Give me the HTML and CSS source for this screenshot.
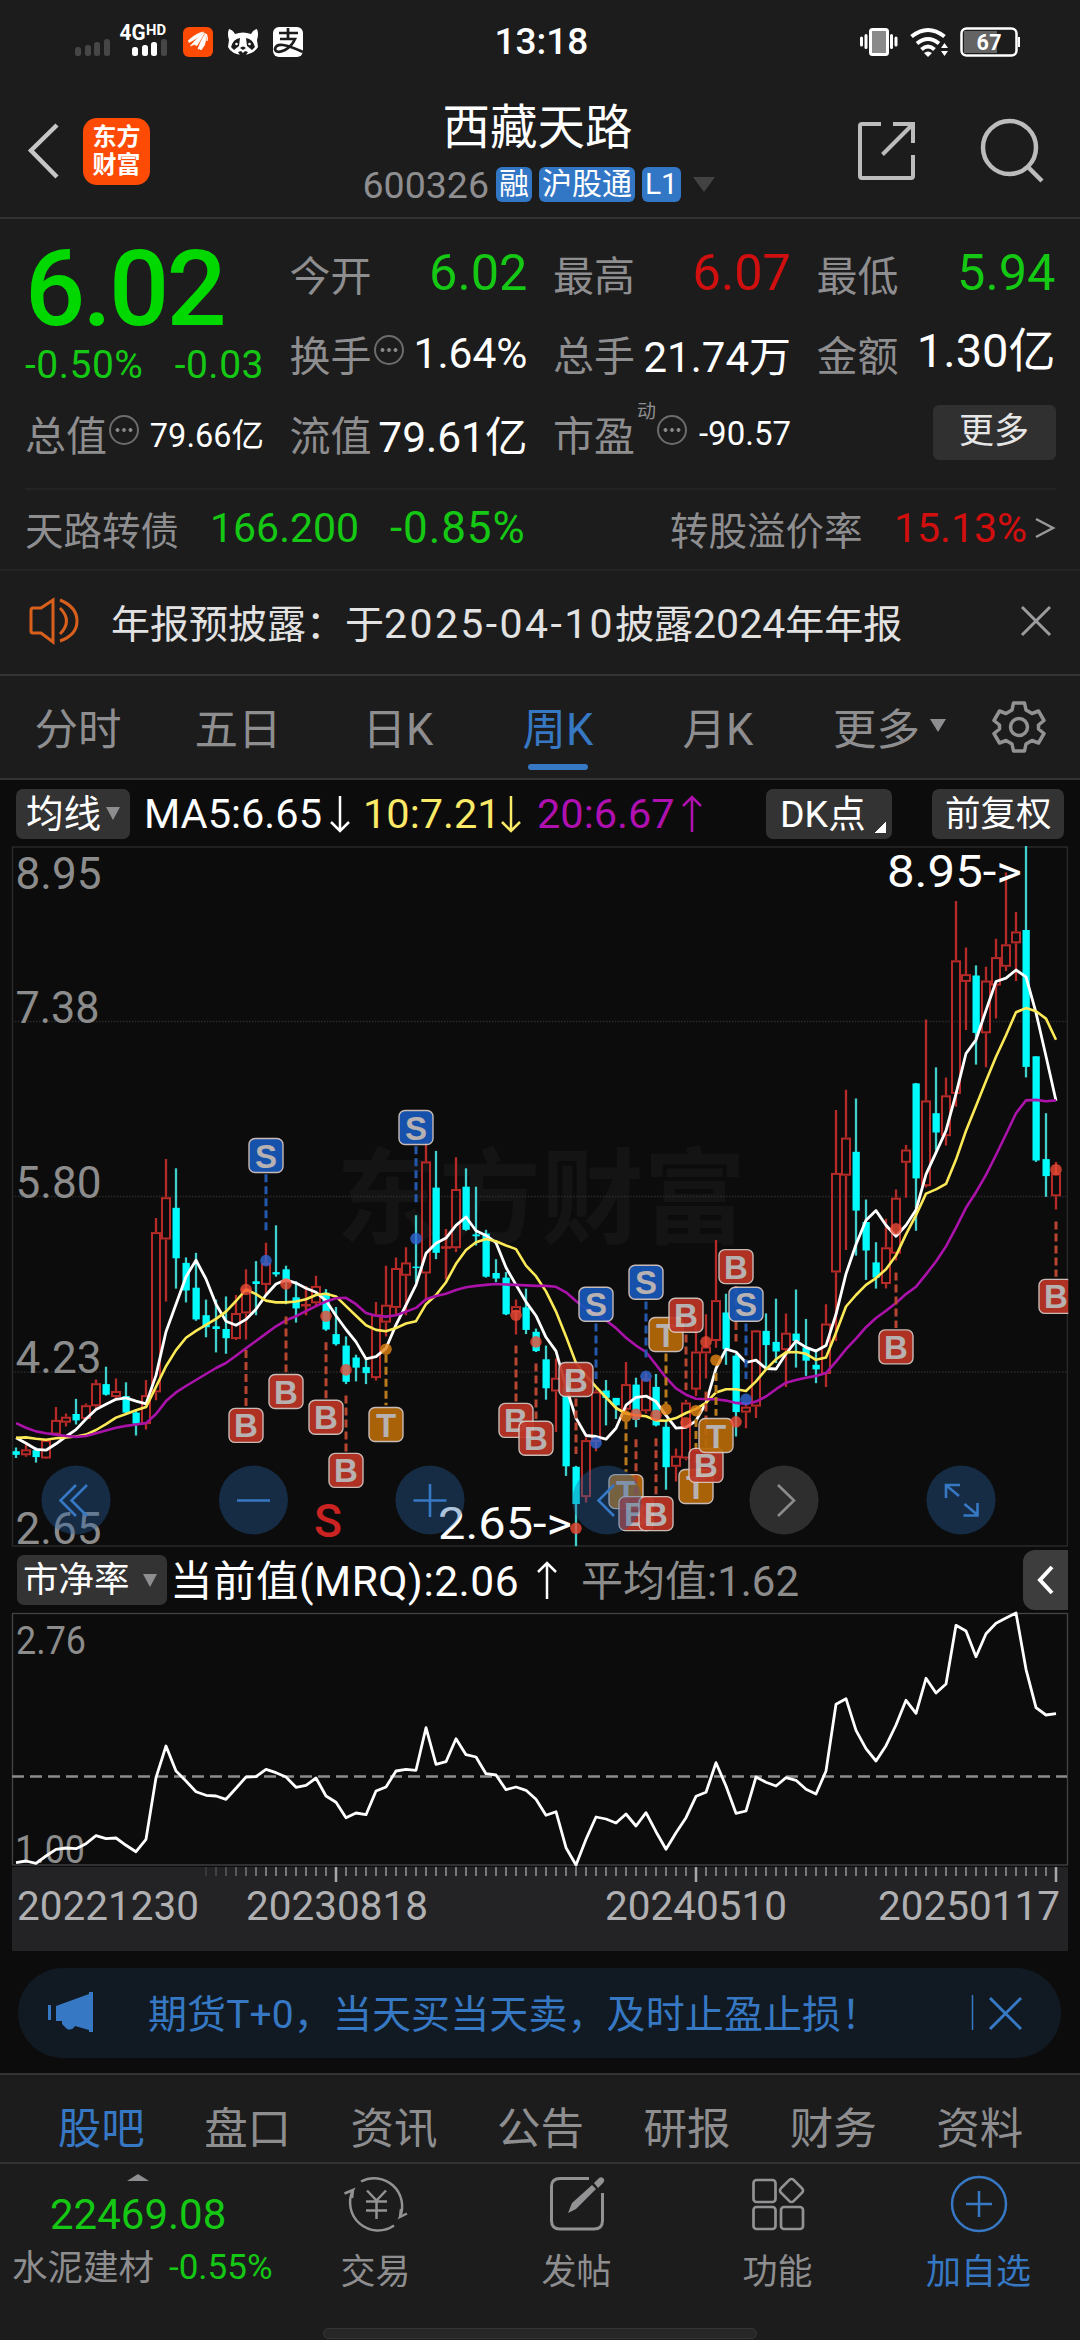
FILE: index.html
```html
<!DOCTYPE html>
<html lang="zh-CN">
<head>
<meta charset="utf-8">
<title>西藏天路 600326</title>
<link rel="stylesheet" href="styles.css">
</head>
<body>
<div class="status">
  <svg class="status-left" width="250" height="60" viewBox="70 10 250 60">
    <g fill="#464646"><rect x="75" y="47" width="6" height="9" rx="2.5"/><rect x="85" y="45" width="6" height="11" rx="2.5"/><rect x="94" y="42" width="6" height="14" rx="2.5"/><rect x="104" y="39" width="6" height="17" rx="2.5"/><rect x="161" y="39" width="6" height="17" rx="2.5"/></g>
    <g fill="#fff"><rect x="132" y="47" width="6" height="9" rx="2.5"/><rect x="142" y="45" width="6" height="11" rx="2.5"/><rect x="151" y="42" width="6" height="14" rx="2.5"/></g>
    <text class="net" x="119.500" y="40" font-size="21.500" textLength="26" lengthAdjust="spacingAndGlyphs">4G</text>
    <text class="net" x="146" y="35" font-size="14" textLength="20" lengthAdjust="spacingAndGlyphs">HD</text>
    <rect x="183" y="27" width="30" height="30" rx="6" fill="#fd4a05"/>
    <path d="M188.500 40.500q8-7.500 15-8.500q-3 4.500-14.500 10.500zM190.500 46q9-11 14-13l-7.500 12.500q-3-2-5.500 0zM198 49q3-9 7.500-15.500q.5 8-1 11.500q-2 3-3.500 5q-1-2-3-1zM206.500 34l.5 7q1-3-.5-7z" fill="#fff" stroke="#fff" stroke-width=".8"/>
    <path d="M229 29q4 1 6 5q8-3 16 0q2-4 6-5q2 5 0 11l1 7q-4 7-15 8q-12-1-15-8l1-7q-2-6 0-11z" fill="#fff"/>
    <path d="M231 47q2-8 9-9l-1 8l-5 4zM255 47q-2-8-9-9l1 8l5 4zM240 48q3-3 6 0l-3 2zM238 52l3-1 2 2 2-2 3 1-2 3h-6z" fill="#1c1c1c"/><circle cx="236.500" cy="44" r="1.300" fill="#fff"/><circle cx="249.500" cy="44" r="1.300" fill="#fff"/>
    <rect x="273" y="27" width="30" height="30" rx="6" fill="#fff"/>
    <path d="M279 33h19M288 28v10M280 39h15q-3 7-10 11q-9 4-10-1q1-5 8-4q7 1 20 7" fill="none" stroke="#1c1c1c" stroke-width="2.700"/>
  </svg>
  <div class="clock">13:18</div>
  <svg class="status-right" width="170" height="60" viewBox="855 10 170 60">
    <rect x="870.500" y="29.500" width="17" height="25" rx="2" fill="#8a8a8a" stroke="#fff" stroke-width="3"/>
    <path d="M861.500 38v7M866 35.500v12M891.500 35.500v12M896 38v7" stroke="#fff" stroke-width="3" stroke-linecap="round"/>
    <g fill="none" stroke="#fff" stroke-width="4"><path d="M911.500 36.500q16.500-13 33 0M917 43.500q11-9 22 0M921.500 49.500q6.500-6 13 0"/></g>
    <path d="M924 53q4-3 8 0l-4 4zM944.500 43l3.500 5h-7zM944.500 56l3.500-5h-7z" fill="#fff"/>
    <rect x="961.500" y="28.500" width="55" height="27" rx="5" fill="none" stroke="#fff" stroke-width="2.500"/>
    <path d="M964 31h33v22h-33z" fill="#646464"/><path d="M1019 37v10" stroke="#fff" stroke-width="2"/>
    <text class="net" x="976.500" y="50" font-size="21.500" textLength="25">67</text>
  </svg>
</div>

<header class="header">
  <div class="head-left">
    <svg width="34" height="60" viewBox="26 122 34 60"><path d="M57 126L31 151.500L57 178" fill="none" stroke="#c6c6c6" stroke-width="4.500"/></svg>
    <div class="logo">东方<br>财富</div>
  </div>
  <div class="title">
    <h1>西藏天路</h1>
    <div class="code"><span class="num">600326</span><b>融</b><b>沪股通</b><b>L1</b><i class="tri"></i></div>
  </div>
  <div class="head-right">
    <svg width="60" height="60" viewBox="857 122 60 60" fill="none" stroke="#bcbcbc" stroke-width="4"><path d="M881 125H862q-2 0-2 2v50q0 2 2 2h49q2 0 2-2V156M893 125h20v19M912 126L882.500 155.500"/></svg>
    <svg width="68" height="70" viewBox="978 117 68 70" fill="none" stroke="#bcbcbc" stroke-width="4.500"><circle cx="1009.500" cy="148.500" r="26.500"/><path d="M1028 168L1042 182"/></svg>
  </div>
</header>

<section class="quote">
  <div class="price">6.02</div>
  <div class="cell"><label>今开</label><span class="v v44 green">6.02</span></div>
  <div class="cell"><label>最高</label><span class="v v44 red">6.07</span></div>
  <div class="cell"><label>最低</label><span class="v v44 green">5.94</span></div>
  <div class="cell change green"><span>-0.50%</span><span class="diff">-0.03</span></div>
  <div class="cell"><label>换手</label><i class="dots"></i><span class="v v42">1.64%</span></div>
  <div class="cell"><label>总手</label><span class="v v41">21.74万</span></div>
  <div class="cell"><label>金额</label><span class="v v47">1.30亿</span></div>
  <div class="cell"><label>总值</label><i class="dots"></i><span class="v v32">79.66亿</span></div>
  <div class="cell"><label>流值</label><span class="v v42">79.61亿</span></div>
  <div class="cell"><label>市盈</label><sup>动</sup><i class="dots"></i><span class="v v33">-90.57</span></div>
  <div class="cell end"><span class="more">更多</span></div>
</section>
<section class="bond">
  <span class="grey">天路转债</span><span class="green b1">166.200</span><span class="green b2">-0.85%</span>
  <span class="grey b3">转股溢价率</span><span class="red b4">15.13%</span>
  <svg width="22" height="24" viewBox="0 0 22 24"><path d="M2 3L19 12L2 21" fill="none" stroke="#9a9a9c" stroke-width="2.500"/></svg>
</section>
<section class="notice">
  <svg width="54" height="48" viewBox="0 0 54 48" fill="none" stroke="#d9601c" stroke-width="3"><path d="M2 13q0-2 2-2h8L24 3v42L12 36H4q-2 0-2-2zM31 11q13 13 0 26M31 3q17 7 17 21T31 44"/></svg>
  <p>年报预披露：于<span class="d1">2025-04-10</span>披露<span class="d2">2024</span>年年报</p>
  <svg width="32" height="32" viewBox="0 0 32 32"><path d="M2 2L30 30M30 2L2 30" stroke="#9c9c9e" stroke-width="3"/></svg>
</section>

<nav class="periods">
  <a>分时</a><a>五日</a><a>日K</a><a class="on">周K</a><a>月K</a><a class="m">更多<i class="tri"></i></a>
  <svg width="56" height="56" viewBox="-28 -28 56 56" fill="none" stroke="#929294" stroke-width="3.500"><path stroke-linejoin="round" d="M-5.500-24H5.500L7-17L13-13.500L19.500-16L25-6.500L19.500-2V2L25 6.500L19.500 16L13 13.500L7 17L5.500 24H-5.500L-7 17L-13 13.500L-19.500 16L-25 6.500L-19.500 2V-2L-25-6.500L-19.500-16L-13-13.500L-7-17Z"/><circle r="8.500"/></svg>
</nav>

<main class="charts">
  <div class="tools">
    <span class="btn ma">均线<i class="tri"></i></span>
    <span class="m5">MA5:6.65</span><svg width="24" height="38" viewBox="0 0 24 38"><path d="M12 1v35M3 27l9 9 9-9" fill="none" stroke="#fff" stroke-width="2.500"/></svg>
    <span class="m10">10:7.21</span><svg width="24" height="38" viewBox="0 0 24 38"><path d="M12 1v35M3 27l9 9 9-9" fill="none" stroke="#fbe968" stroke-width="2.500"/></svg>
    <span class="m20">20:6.67</span><svg width="24" height="38" viewBox="0 0 24 38"><path d="M12 37V2M3 11l9-9 9 9" fill="none" stroke="#b010b0" stroke-width="2.500"/></svg>
    <span class="btn dk">DK点</span><span class="btn fq">前复权</span>
  </div>
  <svg id="kline" class="kline" width="1080" height="706" viewBox="0 842 1080 706"></svg>
  <div class="tools pb">
    <span class="btn pbb">市净率<i class="tri"></i></span>
    <span class="cur">当前值(MRQ):2.06</span><svg width="24" height="40" viewBox="0 0 24 40"><path d="M12 39V3M3 12l9-9 9 9" fill="none" stroke="#fff" stroke-width="2.500"/></svg>
    <span class="avg">平均值:1.62</span>
    <span class="fold"><svg width="20" height="30" viewBox="0 0 20 30"><path d="M16 2L4 15L16 28" fill="none" stroke="#fff" stroke-width="4"/></svg></span>
  </div>
  <svg id="pbline" class="pbline" width="1080" height="342" viewBox="0 1610 1080 342"></svg>
  <div class="banner">
    <svg width="48" height="42" viewBox="0 0 48 42" fill="#3678c3"><path d="M1 13h3v15H1zM9 14L42 2V0h4v40h-4v-2L28 34q-3 5-8 3l-5-5v-3H9z"/></svg>
    <p>期货T+0，当天买当天卖，及时止盈止损！</p>
    <svg width="52" height="38" viewBox="0 0 52 38" stroke="#3678c3" fill="none"><path d="M1.500 1v35" stroke-width="1.500"/><path d="M19 4L50 35M50 4L19 35" stroke-width="3"/></svg>
  </div>
</main>

<nav class="info"><a class="on">股吧</a><a>盘口</a><a>资讯</a><a>公告</a><a>研报</a><a>财务</a><a>资料</a></nav>
<footer class="bottom">
  <div class="sector">
    <i class="up"></i>
    <div class="idx green">22469.08</div>
    <div class="sec"><span>水泥建材</span><em class="green">-0.55%</em></div>
  </div>
  <div class="item"><svg width="68" height="60" viewBox="341 2174 68 60" fill="none" stroke="#929294" stroke-width="2.500"><path d="M360 2181.500A28 28 0 0 1 399 2217L406 2213.500M399 2217L400 2209M393 2225.500A28 28 0 0 1 352 2190L343.500 2193.500M352 2190l-1 8M366 2190.500l9.500 10 9.500-10M375.500 2200v19M365 2201.500h21M365 2210.500h21"/></svg><span>交易</span></div>
  <div class="item"><svg width="60" height="60" viewBox="547 2174 60 60"><path d="M589 2178.500H560q-8.500 0-8.500 8v34q0 8.500 8.500 8.500h34q8.500 0 8.500-8.500V2193" fill="none" stroke="#929294" stroke-width="3"/><path d="M568 2213l4-10 20-18 4 4-20 20zM594 2183l5-5q3-2 5 1 1 2-1 4l-5 5z" fill="#929294"/></svg><span>发帖</span></div>
  <div class="item"><svg width="60" height="60" viewBox="748 2174 60 60" fill="none" stroke="#929294" stroke-width="2.700"><rect x="753.500" y="2180" width="22" height="22" rx="3"/><rect x="753.500" y="2207" width="22" height="22" rx="3"/><rect x="781" y="2207" width="22" height="22" rx="3"/><rect x="782.500" y="2181.500" width="18" height="18" rx="3" transform="rotate(45 791.500 2190.500)"/></svg><span>功能</span></div>
  <div class="item on"><svg width="60" height="60" viewBox="0 0 60 60" fill="none" stroke="#3678c3" stroke-width="2.500"><circle cx="30" cy="30" r="27"/><path d="M30 17v26M17 30h26"/></svg><span>加自选</span></div>
  <div class="home"></div>
</footer>
<script src="chart.js"></script>
</body>
</html>
```
FILE: styles.css
```css
* { box-sizing: border-box; }
body { margin: 0; width: 1080px; height: 2340px; overflow: hidden; background: #1c1c1c; color: #fff; font-family: Roboto, "Noto Sans CJK SC", sans-serif; display: flex; flex-direction: column; white-space: nowrap; }
svg { display: block; flex: none; }
h1, p { margin: 0; font-weight: 400; }
i, em { font-style: normal; }
.green { color: #14c814; }
.red { color: #d20f0f; }
.grey { color: #8e8e90; }
.tri { display: inline-block; border: 8px solid transparent; border-top: 13px solid #8e8e90; border-bottom: 0; }

.status { height: 84px; display: grid; grid-template-columns: 1fr auto 1fr; align-items: start; padding: 10px 55px 0; }
.status-left { margin-left: 15px; }
.clock { font-size: 37px; font-weight: 500; line-height: 64px; width: 91px; }
.status-right { justify-self: end; }
.net { fill: #fff; font-weight: 700; font-family: Roboto, sans-serif; }

.header { height: 135px; border-bottom: 2px solid #323232; display: grid; grid-template-columns: 1fr auto 1fr; align-items: center; padding: 2px 34px 0 26px; }
.head-left { display: flex; align-items: center; gap: 23px; }
.logo { width: 67px; height: 67px; border-radius: 14px; background: #fd4a05; font-size: 24px; font-weight: 700; line-height: 28px; text-align: center; padding-top: 5px; }
.title { width: 350px; margin-left: 3px; }
.title h1 { font-size: 47.500px; line-height: 56px; text-align: center; padding-top: 0; height: 67px; font-weight: 400; }
.code { display: flex; align-items: center; gap: 7px; font-size: 37.500px; line-height: 34px; }
.code .num { color: #8e8e90; width: 127px; }
.code b { background: #3276c6; border-radius: 6px; height: 35px; font-size: 30px; font-weight: 400; padding: 0 3px; }
.code .tri { border-width: 15px 11px 0; border-top-color: #424242; margin-left: 5px; }
.head-right { display: flex; justify-content: flex-end; align-items: center; gap: 61px; }

.quote { height: 269px; padding: 14px 24px 0 25px; display: grid; grid-template-columns: 239px 238px 238px 239px; grid-template-rows: 80px 81px 79px; column-gap: 25.500px; }
.price { color: #00d800; font-size: 106px; font-weight: 500; line-height: 112px; letter-spacing: -2.800px; height: 81px; }
.cell { display: flex; align-items: center; }
.cell label { font-size: 41px; color: #8e8e90; }
.cell .v { margin-left: auto; }
.v44 { font-size: 50.500px; }
.v42 { font-size: 42.500px; }
.v41 { font-size: 42px; }
.v47 { font-size: 47px; line-height: 60px; margin-top: -4px; }
.v32 { font-size: 32.500px; margin-top: -2px; }
.v33 { font-size: 33px; }
.change { font-size: 39px; justify-content: space-between; padding-top: 24px; letter-spacing: .5px; }
.dots { width: 30px; height: 30px; margin: -6px 0 0 2px; border: 2.500px solid #6c6c6e; border-radius: 50%; background: radial-gradient(circle, #8e8e90 1.500px, transparent 2.200px) center / 6.500px 30px repeat-x; background-clip: content-box; padding: 0 3px; }
.cell sup { font-size: 19px; color: #8e8e90; align-self: flex-start; line-height: 24px; margin: 6px -1px 0 2px; }
.end { justify-content: flex-end; }
.more { width: 123px; height: 55px; border-radius: 6px; background: #303030; color: #e6e6e6; font-size: 35px; line-height: 53px; text-align: center; margin-top: -2px; }

.bond { height: 83px; border-bottom: 2px solid #242424; display: flex; align-items: center; padding-left: 25px; font-size: 38.500px; background: linear-gradient(#242424, #242424) 25px 0 / 1031px 2px no-repeat; }
.b1 { font-size: 41px; margin-left: 31px; width: 180px; }
.b2 { font-size: 44px; letter-spacing: .9px; width: 139px; }
.b3 { margin-left: 141px; width: 224px; }
.b4 { font-size: 41px; width: 140px; }

.notice { height: 106px; border-bottom: 2px solid #343434; display: flex; align-items: center; padding: 0 28px 2px 29px; font-size: 39px; color: #e2e2e2; }
.notice p { margin: 0 auto 0 28px; }
.d1 { font-size: 41px; letter-spacing: 2.400px; }
.d2 { font-size: 41px; }

.periods { height: 104px; border-bottom: 2px solid #343434; display: flex; align-items: center; font-size: 43.500px; color: #8e8e90; }
.periods a { width: 160px; height: 102px; line-height: 110px; text-align: center; position: relative; padding-right: 4px; }
.periods .on { color: #3678c3; }
.periods .on::after { content: ""; position: absolute; left: 48px; bottom: 8px; width: 60px; height: 6px; border-radius: 3px; background: #3678c3; }
.periods .m { width: 157px; text-align: left; padding: 0 0 0 33px; margin-right: 34px; }
.m .tri { margin: 0 0 13px 10px; }

.charts { background: #0c0c0c; height: 1296px; border-bottom: 2px solid #333; }
.tools { height: 63px; display: flex; align-items: center; padding: 4px 16px 0; font-size: 41.500px; }
.btn { background: #333334; height: 50px; border-radius: 7px; line-height: 48px; font-size: 37.500px; padding: 0 8px 0 10px; display: flex; align-items: center; }
.ma { width: 114px; }
.ma .tri { border-width: 13px 7px 0; margin-left: 5px; }
.m5 { width: 178px; margin: 0 6px 0 14px; }
.m10 { width: 128px; color: #fbe968; margin: 0 8px 0 11px; }
.m20 { width: 137px; color: #b010b0; margin: 0 6px 0 14px; }
.dk { width: 126px; margin-left: auto; padding-left: 14px; margin-right: 40px; background: linear-gradient(135deg, transparent 50%, #fff 50%) 109px 33px / 11px 11px no-repeat #333334; }
.fq { width: 132px; padding-left: 13px; font-size: 35.500px; }
.pb { height: 62px; padding: 0 12px 0 17px; }
.pbb { width: 150px; padding-left: 6px; font-size: 35.500px; }
.pbb .tri { margin-left: 13px; border-width: 13px 7px 0; }
.cur { font-size: 42.500px; letter-spacing: .5px; width: 361px; margin: -6px 0 0 3px; }
.avg { color: #8c8c8c; margin: -6px 0 0 26px; font-size: 42px; }
.cur + svg { margin-left: 4px; margin-right: -4px; }
.fold { margin-left: auto; width: 45px; height: 60px; border-radius: 12px 0 0 12px; background: #3d3d3e; display: flex; align-items: center; padding-left: 13px; }
.banner { margin: 15px 19px 0 18px; height: 90px; border-radius: 45px; background: #111a22; color: #3678c3; font-size: 39px; display: flex; align-items: center; padding: 0 38px 0 29px; }
.banner p { margin: 0 auto 0 53px; padding-bottom: 5px; letter-spacing: .1px; }

.info { height: 89px; border-bottom: 2px solid #333; display: flex; padding: 0 27px 0 28px; color: #8e8e90; font-size: 43.500px; }
.info a { flex: 1; text-align: center; line-height: 110px; height: 87px; }
.on { color: #3678c3; }
.bottom { height: 176px; display: flex; position: relative; font-size: 35px; color: #8e8e90; }
.sector { width: 275px; }
.up { display: block; width: 22px; height: 7px; margin: 10px 0 0 127px; border: 11px solid transparent; border-bottom: 7px solid #8e8e90; border-top: 0; }
.idx { font-size: 42px; line-height: 48px; margin: 10px 0 0 50px; }
.sec { display: flex; align-items: center; margin: 5px 0 0 12px; line-height: 48px; font-size: 35.500px; }
.sec em { font-size: 35px; margin-left: 15px; }
.item { width: 201px; display: flex; flex-direction: column; align-items: center; padding-top: 10px; }
.item span { line-height: 50px; margin-top: 14px; }
.item.on { color: #3678c3; }
.home { position: absolute; left: 323px; bottom: 1px; width: 434px; height: 11px; border-radius: 6px; background: #272727; border: 1px solid #363636; }
.kline text, .pbline text { font-family: Roboto, "Noto Sans CJK SC", sans-serif; }
```
FILE: chart.js
```js
// Weekly candles: [direction, high, low, body top, body bottom], 1 = up, 0 = down.
const C = [
[0,1322,1345,1330,1338],[1,1315,1342,1326,1339],[0,1322,1355,1328,1343],[1,1305,1347,1306,1346],[1,1234,1296,1262,1294],[1,1248,1276,1255,1268],[0,1216,1272,1249,1263],[1,1226,1262,1230,1260],[1,1174,1240,1182,1232],[0,1146,1209,1184,1207],
[1,1172,1216,1199,1212],[0,1180,1248,1210,1246],[0,1240,1296,1246,1270],[1,1175,1283,1208,1271],[1,822,1219,853,1202],[1,694,1004,777,869],[0,714,976,800,910],[0,908,1006,920,980],[0,898,1046,974,1043],[0,1000,1082,1034,1060],
[0,1000,1115,1058,1064],[0,993,1118,1064,1084],[1,990,1088,1029,1086],[1,934,1087,976,1030],[0,916,1034,960,966],[1,876,990,920,968],[0,838,950,940,945],[0,926,1010,934,962],[0,960,1050,995,1019],[1,970,1034,1008,1016],
[1,948,1012,970,1008],[0,977,1068,985,1065],[0,1016,1100,1075,1097],[0,1080,1184,1100,1179],[0,1120,1178,1126,1148],[0,1130,1184,1147,1160],[1,1005,1176,1032,1171],[1,926,1080,1011,1050],[1,908,1032,931,1018],[1,886,1034,919,948],
[0,816,962,928,931],[1,655,1002,699,943],[0,676,912,756,898],[1,846,956,882,891],[1,690,896,759,888],[0,714,850,754,848],[0,754,882,858,862],[0,848,952,856,950],[0,912,962,942,954],[0,940,1034,952,1032],
[1,1000,1076,1014,1028],[0,976,1075,1017,1066],[0,1063,1114,1070,1112],[0,1100,1218,1130,1193],[1,1128,1288,1170,1200],[0,1160,1384,1190,1363],[0,1362,1537,1364,1445],[1,1300,1442,1306,1430],[1,1195,1330,1200,1310],[0,1175,1274,1198,1214],
[0,1214,1260,1214,1230],[1,1136,1246,1184,1240],[0,1170,1278,1185,1262],[1,1160,1248,1172,1243],[0,1162,1276,1190,1274],[0,1262,1414,1277,1365],[1,1324,1396,1340,1364],[1,1218,1350,1224,1346],[1,1030,1210,1113,1196],[1,1032,1172,1102,1117],
[1,870,1105,1001,1090],[0,987,1142,1028,1108],[0,1118,1298,1122,1245],[1,1225,1280,1233,1246],[1,1066,1258,1067,1233],[0,1030,1147,1068,1099],[0,998,1138,1092,1113],[1,1030,1190,1072,1110],[0,978,1148,1074,1090],[0,1042,1166,1104,1133],
[0,1108,1182,1142,1152],[1,1010,1190,1052,1162],[1,587,1090,724,941],[1,543,892,647,730],[0,562,904,678,806],[0,782,957,831,893],[0,875,976,919,952],[1,824,976,886,966],[1,760,915,778,900],[1,663,778,673,702],
[0,528,850,529,736],[1,390,756,566,753],[0,494,675,594,636],[1,516,664,555,644],[1,132,580,261,552],[1,233,413,291,308],[0,272,488,294,419],[1,275,494,305,420],[1,214,388,254,316],[1,70,284,226,275],
[1,156,306,198,224],[0,12,516,195,493],[0,470,700,470,697],[0,594,776,694,731],[1,700,804,725,775]];
const MA5 = [1301,1313,1326,1328,1314,1298,1283,1260,1239,1228,1217,1214,1221,1227,1165,1070,1010,950,914,955,1010,1047,1056,1043,1021,990,966,957,964,975,984,1002,1035,1065,1092,1129,1124,1106,1055,1012,968,899,877,866,838,820,850,860,876,930,968,1005,1035,1082,1112,1190,1258,1296,1298,1304,1280,1230,1213,1210,1222,1252,1280,1278,1264,1225,1150,1108,1114,1137,1132,1150,1151,1118,1090,1104,1112,1100,1032,944,880,827,806,838,862,838,805,727,680,632,552,464,434,370,307,300,282,297,375,470,567];
const MA10 = [1301,1300,1303,1305,1302,1300,1298,1294,1284,1271,1257,1249,1241,1234,1190,1145,1110,1083,1068,1055,1042,1026,1003,978,988,1002,1006,1006,1004,999,990,987,993,1014,1035,1056,1066,1069,1062,1052,1047,1010,990,962,922,892,875,868,873,882,890,926,949,982,1026,1080,1138,1165,1190,1213,1236,1248,1252,1254,1263,1264,1258,1247,1238,1225,1202,1195,1195,1199,1178,1152,1130,1115,1114,1118,1131,1126,1072,1015,990,968,953,934,904,858,816,769,760,748,695,632,578,524,471,424,374,365,372,388,434];
const MA20 = [1269,1279,1287,1291,1294,1297,1299,1297,1291,1285,1279,1275,1272,1269,1249,1221,1202,1188,1175,1162,1149,1138,1122,1106,1090,1074,1058,1045,1036,1025,1014,1004,997,996,1010,1029,1035,1037,1034,1026,1018,999,992,987,979,973,970,968,966,967,968,969,970,970,972,984,1003,1020,1030,1045,1062,1083,1100,1114,1142,1170,1193,1207,1216,1217,1217,1220,1225,1227,1222,1211,1195,1181,1175,1170,1166,1160,1135,1108,1085,1060,1040,1024,1007,988,972,945,917,884,843,800,766,728,685,640,594,566,565,568,566];
// Trade markers: [week index, kind, badge centre, dot, dash start, dash end]
const M = [
[23,'B',1274,978,1110,1232],[25,'S',686,915,727,850],[27,'B',1200,966,1037,1158],[31,'B',1256,1036,1093,1215],[33,'B',1372,1153,1209,1331],[37,'T',1272,1108,1120,1230],[40,'S',625,867,666,788],[50,'B',1263,1034,1100,1222],[52,'B',1302,1092,1139,1260],[56,'B',1174,1498,1215,1336],[58,'S',1010,1312,1052,1173],[61,'T',1418,1254,1265,1375],[62,'B',1466,1250,1304,1425],[63,'S',962,1167,1004,1126],[64,'B',1466,1252,1302,1424],[65,'T',1076,1239,1117,1228],[67,'B',1034,1268,1076,1197],[68,'T',1407,1242,1260,1365],[69,'B',1361,1092,1200,1320],[70,'T',1296,1132,1160,1253],[72,'B',928,1266,970,1091],[73,'S',1010,1217,1052,1173],[88,'B',1103,846,941,1062],[104,'B',993,717,830,950]];
const PB = [965,960,967,945,925,921,923,908,884,893,891,913,932,895,710,615,690,720,752,763,765,775,742,708,707,685,695,708,739,733,711,765,784,830,816,821,750,738,690,685,688,560,670,662,593,641,648,698,702,746,738,748,775,823,812,920,972,895,828,834,846,819,855,815,872,925,875,830,766,754,665,735,817,810,708,724,735,710,718,745,759,690,490,473,568,623,660,614,552,478,517,412,456,429,253,270,347,278,247,231,216,385,500,522,518];

const X = i => 16 + 10 * i;
const Y = v => +(839.5 + v / 2.178).toFixed(1);
const P = v => +(1540 + v / 3).toFixed(1);
const line = (d, f, color, w) => `<polyline points="${d.map((v, i) => X(i) + ',' + f(v)).join(' ')}" fill="none" stroke="${color}" stroke-width="${w}" stroke-linejoin="round"/>`;
const text = (s, x, y, size, len, color, extra = '') => `<text x="${x}" y="${y}" font-size="${size}" textLength="${len}" lengthAdjust="spacingAndGlyphs" fill="${color}" ${extra}>${s}</text>`;

let k = text('东方财富', 336, 1235, 104, 410, '#141414', 'font-weight="700"');
k += '<rect x="12.500" y="846" width="1055" height="699" fill="none" stroke="#292929" stroke-width="1.500"/>';
for (const y of [1020.500, 1195.500, 1371]) k += `<path d="M12 ${y}H1067" stroke="#2a2a2a" stroke-width="1.500" stroke-dasharray="1.500 1.500"/>`;
k += text('8.95', 15.500, 888, 44, 86, '#8c8c8c') + text('7.38', 15.500, 1022, 44, 84, '#8c8c8c') + text('5.80', 15.500, 1197, 44, 86, '#8c8c8c') + text('4.23', 15.500, 1372, 44, 86, '#8c8c8c') + text('2.65', 15.500, 1542.500, 44, 86, '#8c8c8c');
C.forEach(([up, h, l, t, b], i) => {
  const x = X(i), yt = Y(t), yb = Y(b), color = up ? '#b62a28' : '#3fd0cc';
  if (!up) {
    k += `<path d="M${x} ${Y(h)}V${Y(l)}" stroke="${color}" stroke-width="2.300"/><rect x="${x - 3.500}" y="${yt}" width="7.300" height="${Math.max(1.500, yb - yt)}" fill="#00fcfc"/>`;
  } else if (b - t < 10) {
    k += `<path d="M${x} ${Y(h)}V${Y(l)}M${x - 5} ${(yt + yb) / 2}h10" stroke="${color}" stroke-width="2.500"/>`;
  } else {
    k += `<path d="M${x} ${Y(h)}V${yt}M${x} ${yb}V${Y(l)}" stroke="${color}" stroke-width="2.300"/><rect x="${x - 4}" y="${yt + 1}" width="8" height="${yb - yt - 2}" fill="none" stroke="${color}" stroke-width="2"/>`;
  }
});
k += line(MA5, Y, '#fff', 2.800) + line(MA10, Y, '#fbe957', 2.600) + line(MA20, Y, '#aa12aa', 2.600);
const tone = { B: ['#bd3526', '#ee4a34', '#b8452f'], S: ['#1757ba', '#3067d4', '#2358ad'], T: ['#b76a08', '#e58611', '#b97a1c'] };
for (const [i, kind, badge, dot, d1, d2] of M) {
  const x = X(i), y = Y(badge), [fill, point, dash] = tone[kind];
  k += `<circle cx="${x}" cy="${Y(dot)}" r="5.800" fill="${point}" opacity=".8"/><path d="M${x} ${Y(d1)}V${Y(d2)}" stroke="${dash}" stroke-width="3" stroke-dasharray="8 4"/>`;
  k += `<g opacity=".92"><rect x="${x - 17}" y="${y - 17}" width="34" height="34" rx="6" fill="${fill}" stroke="#d8c9c4" stroke-width="1.400"/><text x="${x}" y="${y + 12}" text-anchor="middle" font-size="33" font-weight="700" style="font-family:'Liberation Sans',sans-serif" fill="#c6c0c0">${kind}</text></g>`;
}
k += '<rect x="1068.300" y="842" width="12" height="706" fill="#0c0c0c"/>';
k += text('S', 314, 1535.500, 46, 28, '#cb2222', 'font-weight="500"');
k += text('2.65-&gt;', 438, 1538, 44, 134, '#fff') + text('8.95-&gt;', 887, 886, 44, 135, '#fff');
for (const [x, icon] of [
  [76, 'M76 1484L60.500 1499.500L76 1515M87 1484L71.500 1499.500L87 1515'], [253.500, 'M237 1499.500h33'], [430, 'M413.500 1499.500h33M430 1483v33'],
  [607, 'M614 1484L598.500 1499.500L614 1515'], [784, 'M778 1484L794 1499.500L778 1515'], [961, 'M946 1497v-13h14M947 1485L959 1495M964.500 1503L976.500 1513M977.500 1502v12.500h-14'] ]) {
  const grey = x === 784;
  k += `<circle cx="${x}" cy="1499" r="34.500" fill="${grey ? '#4a4a4a' : '#2560a0'}" opacity="${grey ? .55 : .38}"/><path d="${icon}" fill="none" stroke="${grey ? '#8c8c8c' : '#3678c3'}" stroke-width="2.600"/>`;
}
document.getElementById('kline').innerHTML = k;

let p = '<rect x="12.500" y="1612.500" width="1055" height="251.500" fill="none" stroke="#444" stroke-width="1.300"/><rect x="12" y="1866" width="1056" height="84" fill="#232325"/>';
p += text('2.76', 16, 1652.500, 38, 70, '#8c8c8c') + text('1.00', 15, 1861.500, 38, 70, '#8c8c8c');
p += '<path d="M12 1775.500H1067" stroke="#8c8c8c" stroke-width="2.500" stroke-dasharray="12 6"/>' + line(PB, P, '#fff', 2.800);
for (let i = 19; i < 105; i++) {
  const big = i % 36 === 32;
  p += `<path d="M${X(i)} 1866v${big ? 15 : 9}" stroke="#a8a8aa" stroke-width="${big ? 2.500 : 1.300}" opacity="${Math.min(1, (i - 17) / 8)}"/>`;
}
for (const [s, x] of [['20221230', 17], ['20230818', 246], ['20240510', 605], ['20250117', 878]]) p += text(s, x, 1918.500, 41, 182, '#b0b0b2');
document.getElementById('pbline').innerHTML = p;
```
